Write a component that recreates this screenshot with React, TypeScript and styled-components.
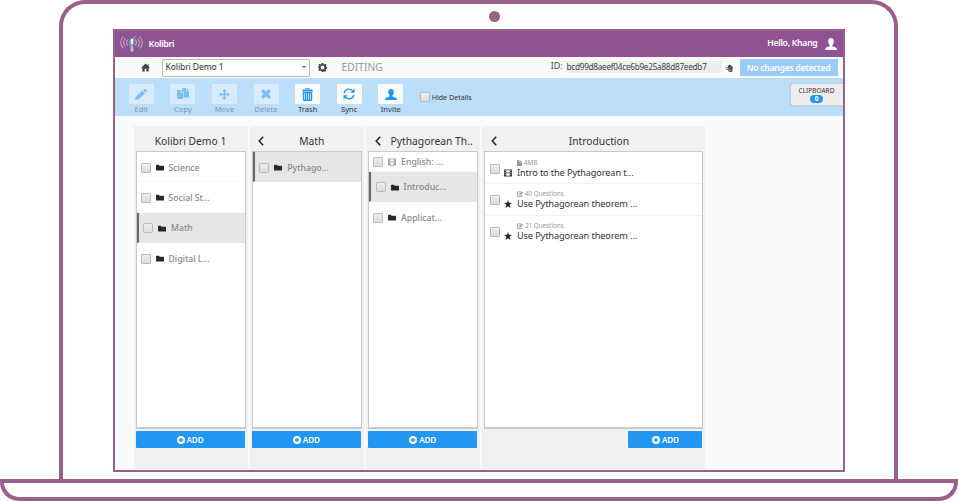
import React from "react";
import styled, { createGlobalStyle } from "styled-components";

const plum = "#996189";

const Global = createGlobalStyle`
  * { box-sizing: border-box; }
  html, body { margin: 0; background: #fff; overflow: hidden; }
  body { font-family: "Noto Sans", "Open Sans", sans-serif; color: #333; }
  svg { display: block; flex: none; }
`;

/* Laptop frame */
const Laptop = styled.div`
  width: 958px;
  height: 501px;
  display: flex;
  flex-direction: column;
  align-items: center;
`;
const Lid = styled.div`
  width: 839px;
  height: 479px;
  margin-left: -1px;
  border: 4px solid ${plum};
  border-bottom: 0;
  border-radius: 26px 26px 0 0;
  display: flex;
  flex-direction: column;
  align-items: center;
`;
const Camera = styled.div`
  width: 11px;
  height: 11px;
  border-radius: 50%;
  background: ${plum};
  margin: 7px 0 7px 32px;
`;
const Base = styled.div`
  width: 958px;
  height: 22px;
  border: 4px solid ${plum};
  border-radius: 0 0 19px 19px;
`;
const Screen = styled.div`
  width: 732px;
  height: 443px;
  border: 2px solid ${plum};
  background: #fafafa;
  display: flex;
  flex-direction: column;
  overflow: hidden;
`;

/* Bars */
const Header = styled.header`
  height: 26px;
  flex: none;
  background: #8f5293;
  color: #fff;
  display: flex;
  align-items: center;
  padding: 0 6px 0 5px;
`;
const Brand = styled.div`
  font-size: 9px;
  font-weight: 600;
  letter-spacing: -0.4px;
  margin: -2px 0 0 5px;
  flex: 1;
`;
const Greeting = styled.div`
  font-size: 8.6px;
  font-weight: 600;
  letter-spacing: -0.25px;
  margin: -3px 7px 0 0;
`;
const ChannelBar = styled.div`
  height: 21px;
  flex: none;
  display: flex;
  align-items: center;
  padding: 0 5px 0 26px;
`;
const ChannelSelect = styled.div`
  width: 148px;
  height: 18px;
  margin: 0 8px 0 12px;
  border: 1px solid #bbb;
  border-radius: 2px;
  background: #fff;
  display: flex;
  align-items: center;
  justify-content: space-between;
  padding: 0 3px 1px;
  font-size: 8.6px;
  letter-spacing: -0.12px;
`;
const Caret = styled.i`
  border: 2px solid transparent;
  border-top-color: #555;
  border-bottom: 0;
`;
const Mode = styled.div`
  margin: -2px 0 0 15px;
  font-size: 10.3px;
  color: #999;
  flex: 1;
`;
const IdLabel = styled.span`
  font-size: 8.8px;
  color: #444;
  margin: -4px 3px 0 0;
`;
const IdValue = styled.span`
  width: 156px;
  height: 12px;
  line-height: 12px;
  padding-left: 1px;
  background: #eee;
  font-size: 8.2px;
  letter-spacing: -0.26px;
  color: #444;
  margin: -2px 3px 0 0;
  white-space: nowrap;
`;
const StatusButton = styled.div`
  width: 98px;
  height: 17px;
  margin-left: 7px;
  background: #9bcbfa;
  color: #fff;
  font-size: 8.7px;
  font-weight: 600;
  letter-spacing: -0.32px;
  display: flex;
  align-items: center;
  justify-content: center;
`;
const Toolbar = styled.div`
  height: 38px;
  flex: none;
  background: #bbdefb;
  display: flex;
  padding-left: 6px;
  align-items: flex-start;
`;
const Tool = styled.div<{ $off?: boolean }>`
  width: 41.6px;
  padding-top: 6px;
  display: flex;
  flex-direction: column;
  align-items: center;
  font-size: 7.6px;
  line-height: 9px;
  color: ${(p) => (p.$off ? "#8099ae" : "#333")};
`;
const ToolIcon = styled.div<{ $off?: boolean }>`
  width: 25px;
  height: 20px;
  margin-bottom: 1px;
  border-radius: 1px;
  background: ${(p) => (p.$off ? "#d8ebfc" : "#fafafa")};
  color: ${(p) => (p.$off ? "#7dbdf8" : "#2196f3")};
  display: flex;
  align-items: center;
  justify-content: center;
`;
const HideDetails = styled.div`
  display: flex;
  align-items: center;
  gap: 2px;
  height: 38px;
  margin-left: 8px;
  font-size: 7.1px;
  flex: 1;
`;
const Clipboard = styled.div`
  width: 53px;
  height: 23px;
  margin-top: 5px;
  border: 1px solid #ccc;
  border-right: 0;
  border-radius: 4px 0 0 4px;
  background: #eee;
  box-shadow: 0 0 1px #aaa;
  display: flex;
  flex-direction: column;
  align-items: center;
  padding-top: 3px;
  font-size: 6.5px;
  line-height: 8px;
`;
const Badge = styled.span`
  width: 13px;
  height: 8px;
  border-radius: 4px;
  background: #2196f3;
  color: #fff;
  font-weight: 700;
  text-align: center;
`;

/* Topic tree columns */
const Columns = styled.main`
  display: flex;
  gap: 2.3px;
  padding: 10px 0 1px 19px;
  flex: 1;
`;
const Column = styled.section<{ $w: number }>`
  width: ${(p) => p.$w}px;
  background: #f1f1f1;
  padding: 0 2px;
  display: flex;
  flex-direction: column;
`;
const ColumnHead = styled.div<{ $root?: boolean }>`
  height: 25px;
  display: grid;
  grid-template-columns: ${(p) => (p.$root ? "20px 1fr 20px" : "20px 1fr 9px")};
  align-items: center;
  font-size: 10.3px;
  padding: 5px 0 0 ${(p) => (p.$root ? 0 : 6)}px;
  & > svg { margin: -1px 0 0 0.5px; }
`;
const Title = styled.div<{ $wide?: boolean }>`
  text-align: center;
  white-space: nowrap;
  grid-column: 2;
  margin-right: ${(p) => (p.$wide ? "-5px" : "7px")};
  margin-left: ${(p) => (p.$wide ? "-5px" : "0")};
`;
const Panel = styled.div`
  height: 278px;
  border: 1px solid #c9c9c9;
  border-bottom-width: 2px;
  border-right-width: 1.5px;
  background: #fff;
`;
const Row = styled.div<{ $sel?: boolean; $h?: number; $last?: boolean }>`
  height: ${(p) => p.$h ?? 30.3}px;
  display: flex;
  align-items: center;
  gap: 5px;
  padding: 2px 0 0 ${(p) => (p.$sel ? 4.5 : 4)}px;
  border-left: ${(p) => (p.$sel ? "2px solid #666" : "0")};
  border-bottom: 1px solid ${(p) => (p.$sel ? "#e6e6e6" : p.$last ? "#fff" : "#f7f7f7")};
  background: ${(p) => (p.$sel ? "#e6e6e6" : "#fff")};
  font-size: 8.7px;
  font-weight: 500;
  color: #888;
  white-space: nowrap;
`;
const Check = styled.i`
  width: 10px;
  height: 10px;
  flex: none;
  border: 1px solid #bcbcbc;
  border-radius: 1px;
  background: linear-gradient(#eee, #dcdcdc);
`;
const DetailRow = styled.div<{ $h: number }>`
  height: ${(p) => p.$h}px;
  padding: 2px 0 0 4.5px;
  border-bottom: 1px solid #f2f2f2;
  &:last-child { border-bottom-color: #fff; }
  display: flex;
  align-items: center;
  gap: 4px;
`;
const DetailIcon = styled.div`
  padding-top: 8px;
  width: 9px;
`;
const Detail = styled.div`
  display: flex;
  flex-direction: column;
`;
const Meta = styled.div`
  display: flex;
  align-items: center;
  gap: 2px;
  height: 8px;
  font-size: 6.3px;
  line-height: 8px;
  color: #999;
`;
const Name = styled.div`
  font-size: 9.2px;
  letter-spacing: -0.11px;
  line-height: 12px;
  white-space: nowrap;
  color: #333;
`;
const Add = styled.div<{ $w?: number }>`
  width: ${(p) => (p.$w ? p.$w + "px" : "auto")};
  align-self: ${(p) => (p.$w ? "flex-end" : "stretch")};
  height: 17px;
  margin: 2px 1px 0 0;
  border-radius: 1px;
  background: #2196f3;
  color: #fff;
  display: flex;
  align-items: center;
  justify-content: center;
  gap: 2px;
  font-size: 8.2px;
  font-weight: 600;
  letter-spacing: -0.2px;
`;

type IconProps = { s?: number; h?: number; c?: string };
const Svg = ({ s = 12, h, c = "currentColor", children }: IconProps & { children: React.ReactNode }) => (
  <svg width={s} height={h ?? s} viewBox="0 0 16 16" fill={c} preserveAspectRatio="none">{children}</svg>
);
const User = (p: IconProps) => (
  <Svg {...p}><path d="M8 0C5.500 0 4.200 1.800 4.300 4.200c0 2.500.9 4 1.900 5.100v1.300C5.600 11.600 1 12 .3 14.200L0 16h16l-.3-1.800C15 12 10.400 11.600 9.800 10.600V9.300c1-1.100 1.900-2.600 1.900-5.100C11.800 1.800 10.500 0 8 0z" /></Svg>
);
const Home = () => <Svg s={9} c="#444"><path d="M8 1 0 9h2.300v6h4.200v-5h3v5h4.200V9H16l-2.500-2.600V2h-2v2.400z" /></Svg>;
const Gear = () => (
  <Svg s={9} c="#444"><path fillRule="evenodd" d="M6.500 0h3l.5 2.200 1.200.5 2-1.200 2 2-1.200 2 .5 1.200 1.500.3v3l-2 .500-.5 1.200 1.200 2-2 2-2-1.200-1.200.5L9.500 16h-3L6 13.800l-1.200-.5-2 1.200-2-2 1.200-2-.5-1.200L0 9V6.500L1.500 6.700 2 5.500.8 3.500l2-2 2 1.200L6 2.200zM8 4.600a3.400 3.400 0 1 0 0 6.800 3.400 3.400 0 0 0 0-6.800z" /></Svg>
);
const Pencil = () => <Svg s={12} h={11}><path d="M0 16l1.200-5L9.700 2.600l3.700 3.700L5 14.800zM10.800 1.500 12.100.3c.5-.4 1-.4 1.500 0L15.700 2.400c.5.500.5 1 0 1.500l-1.200 1.300z" /></Svg>;
const Copy = () => <Svg s={12} h={12}><path d="M0 2.500h4.500V6.500H8V14.500H0zM5.200 2.500 8 5.800H5.200zM8.700 0h3.300v4.500h4V12.500H8.700V5.500L7 3.300V0zM12.700 0 16 3.800h-3.300z" /></Svg>;
const Move = () => <Svg s={11}><path d="M8 0l3.300 3.600H9.200v3.200h3.200V4.700L16 8l-3.600 3.300V9.200H9.200v3.200h2.100L8 16l-3.300-3.600h2.100V9.200H3.600v2.100L0 8l3.600-3.300v2.100h3.200V3.600H4.700z" /></Svg>;
const Cross = () => <Svg s={10}><path d="M3.600 0 8 4.300 12.400 0 16 3.600 11.700 8 16 12.400 12.400 16 8 11.700 3.600 16 0 12.400 4.300 8 0 3.600z" /></Svg>;
const Trash = () => (
  <Svg s={11} h={13}>
    <path fillRule="evenodd" d="M5 1.800V.8L5.800 0h4.400l.8.800v1h3.800L16 4.200H0L1.200 1.800zm1.300 0h3.400v-.9H6.300z" />
    <path fillRule="evenodd" d="M1.200 5h13.600v9.500L13.500 16h-11l-1.300-1.500zM3.200 6.500v8h1v-8zm2.900 0v8h1v-8zm2.900 0v8h1v-8zm2.900 0v8h1v-8z" />
  </Svg>
);
const Sync = () => (
  <Svg s={12}><g fill="none" stroke="currentColor" strokeWidth="1.900"><path d="M1.500 6.800C2.300 3.500 5 1.500 8 1.500c2.200 0 4.200 1.200 5.300 2.900M14.500 9.200c-.8 3.300-3.500 5.300-6.500 5.300-2.200 0-4.200-1.200-5.300-2.900" /></g><path d="M15.300.8v5.600H9.700zM.7 15.200V9.600h5.600z" /></Svg>
);
const Folder = () => <Svg s={8} h={7} c="#282828"><path d="M0 3c0-1 .6-1.500 1.500-1.500h4L7.500 4h7c1 0 1.500.6 1.500 1.500v8c0 1-.6 1.500-1.500 1.500h-13C.6 15 0 14.500 0 13.500z" /></Svg>;
const Film = ({ c = "#333" }: IconProps) => <Svg s={8} c={c}><path fillRule="evenodd" d="M0 1h16v14H0zm1.500 1.500v2h1.500v-2zm0 3.500v2H3V6zm0 3.500v2H3v-2zm3-7V7h7V2.500zm0 6v5h7v-5zm8.500-6v2h1.500v-2zM13 6v2h1.500V6zm0 3.500v2h1.500v-2z" /></Svg>;
const Star = () => <Svg s={8} c="#222"><path d="m8 0 2 5.700 6 .2-4.800 3.700L13 16l-5-3.700L3 16l1.800-6.400L0 5.900l6-.2z" /></Svg>;
const Doc = () => <Svg s={5} h={6} c="#999"><path d="M0 0h8v6h8v10H0zM10 0l6 5h-6z" /></Svg>;
const Edit = () => <Svg s={6} c="#999"><path d="M12 1H3C1 1 0 2 0 4v9c0 2 1 3 3 3h8c2 0 3-1 3-3V9l-2 2v3H2V3h8zM5 12l1-4 7-7 3 3-7 7zM4 6l3 3 1-1-3-3z" /></Svg>;
const Paste = () => (
  <Svg s={8} h={8} c="#444">
    <path d="M6 3.500 9.500 1l4.500 3 1.500 2-1 9.500H7V12H2.500v-1.700H7V8.500H0L1.500 7H6z" />
    <path d="M9 6h4.500M9 9v5M11.500 9v5" stroke="#aaa" strokeWidth="1" />
  </Svg>
);
const Plus = () => <Svg s={8}><path fillRule="evenodd" d="M8 0a8 8 0 1 0 0 16A8 8 0 0 0 8 0zM6.700 3.800h2.600v2.900h2.900v2.600H9.300v2.900H6.700V9.300H3.800V6.700h2.900z" /></Svg>;
const Back = () => (
  <svg width="6" height="10" viewBox="0 0 6 10" fill="none" stroke="#222" strokeWidth="1.500"><path d="M5.200.8 1.200 5l4 4.200" /></svg>
);
const Logo = () => (
  <svg width="24" height="20" viewBox="0 0 24 20" fill="none">
    <g stroke="#b9a3cb" strokeWidth="1.100">
      <path d="M8 5.500Q5 8.500 8 11.500M5.500 4Q1.500 8.500 5.500 13M3.200 2.500Q-1.800 8.500 3.200 14.500M15 5.500q3 3 0 6M17.500 4q4 4.500 0 9M19.800 2.500q5 6 0 12" />
    </g>
    <path d="M9.500 6.500q.5-2.500 3-2.500l4.500-3-3 4 .5 5-1.500 2h-3l-1-2z" fill="#80b0b5" />
    <path d="M11 5h2v5h-2z" fill="#e5f7ee" />
    <path d="M10.500 12h2.500l.8 4-.8 2h-1.700l-1-2z" fill="#b0bac6" />
    <path d="M9.500 8.500l1.500 3M14 8l-1 4" stroke="#5e9a9d" />
  </svg>
);

const tools = [
  { name: "Edit", icon: <Pencil />, off: true },
  { name: "Copy", icon: <Copy />, off: true },
  { name: "Move", icon: <Move />, off: true },
  { name: "Delete", icon: <Cross />, off: true },
  { name: "Trash", icon: <Trash /> },
  { name: "Sync", icon: <Sync /> },
  { name: "Invite", icon: <User s={12} h={11} /> },
];

const Topic = ({ name, sel, last }: { name: string; sel?: boolean; last?: boolean }) => (
  <Row $sel={sel} $last={last}><Check /><Folder />{name}</Row>
);
const AddButton = ({ w }: { w?: number }) => <Add $w={w}><Plus />ADD</Add>;

const lessons = [
  { h: 32, meta: "4MB", metaIcon: <Doc />, icon: <Film />, name: "Intro to the Pythagorean t..." },
  { h: 31.5, meta: "40 Questions", metaIcon: <Edit />, icon: <Star />, name: "Use Pythagorean theorem ..." },
  { h: 31.5, meta: "21 Questions", metaIcon: <Edit />, icon: <Star />, name: "Use Pythagorean theorem ..." },
];

export default function App() {
  return (
    <Laptop>
      <Global />
      <Lid>
        <Camera />
        <Screen>
          <Header>
            <Logo />
            <Brand>Kolibri</Brand>
            <Greeting>Hello, Khang</Greeting>
            <User s={12} h={12} />
          </Header>
          <ChannelBar>
            <Home />
            <ChannelSelect>Kolibri Demo 1<Caret /></ChannelSelect>
            <Gear />
            <Mode>EDITING</Mode>
            <IdLabel>ID:</IdLabel>
            <IdValue>bcd99d8aeef04ce6b9e25a88d87eedb7</IdValue>
            <Paste />
            <StatusButton>No changes detected</StatusButton>
          </ChannelBar>
          <Toolbar>
            {tools.map((t) => (
              <Tool key={t.name} $off={t.off}>
                <ToolIcon $off={t.off}>{t.icon}</ToolIcon>
                {t.name}
              </Tool>
            ))}
            <HideDetails><Check />Hide Details</HideDetails>
            <Clipboard>CLIPBOARD<Badge>0</Badge></Clipboard>
          </Toolbar>
          <Columns>
            <Column $w={114}>
              <ColumnHead $root><Title $wide>Kolibri Demo 1</Title></ColumnHead>
              <Panel>
                <Topic name="Science" />
                <Topic name="Social St..." />
                <Topic name="Math" sel />
                <Topic name="Digital L..." last />
              </Panel>
              <AddButton />
            </Column>
            <Column $w={114}>
              <ColumnHead><Back /><Title>Math</Title></ColumnHead>
              <Panel><Topic name="Pythago..." sel /></Panel>
              <AddButton />
            </Column>
            <Column $w={114}>
              <ColumnHead><Back /><Title $wide>Pythagorean Th..</Title></ColumnHead>
              <Panel>
                <Row $h={19.7}><Check /><Film c="#999" />English: ...</Row>
                <Topic name="Introduc..." sel />
                <Topic name="Applicat..." last />
              </Panel>
              <AddButton />
            </Column>
            <Column $w={223}>
              <ColumnHead><Back /><Title>Introduction</Title></ColumnHead>
              <Panel>
                {lessons.map((l) => (
                  <DetailRow key={l.meta} $h={l.h}>
                    <Check />
                    <DetailIcon>{l.icon}</DetailIcon>
                    <Detail>
                      <Meta>{l.metaIcon}{l.meta}</Meta>
                      <Name>{l.name}</Name>
                    </Detail>
                  </DetailRow>
                ))}
              </Panel>
              <AddButton w={74} />
            </Column>
          </Columns>
        </Screen>
      </Lid>
      <Base />
    </Laptop>
  );
}
